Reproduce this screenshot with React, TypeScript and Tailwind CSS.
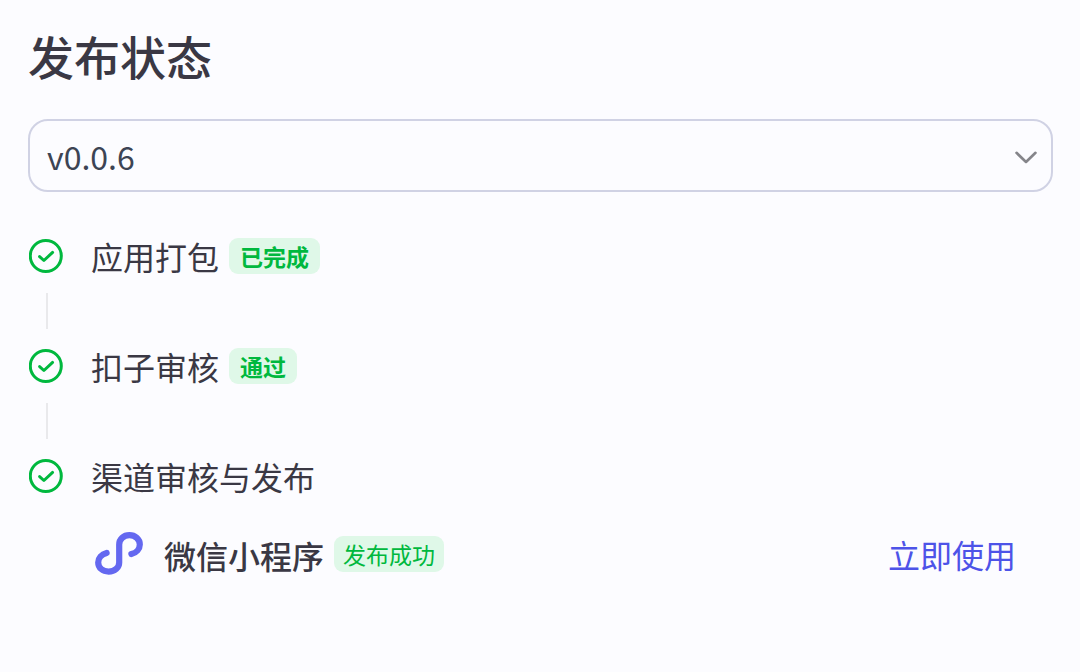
import { useState } from "react";

function CheckCircle() {
  return (
    <svg viewBox="0 0 34 34" className="h-[34px] w-[34px] shrink-0" fill="none" stroke="#00b83e" aria-hidden="true">
      <circle cx="16.8" cy="17" r="15.5" strokeWidth="3" />
      <path d="M10.6 17.6 L14.9 21.5 L23.6 13.4" strokeWidth="3" strokeLinecap="round" strokeLinejoin="round" />
    </svg>
  );
}

function MiniProgramLogo() {
  return (
    <svg viewBox="0 0 50 44" className="h-[44px] w-[50px] shrink-0" fill="none" aria-hidden="true">
      <path
        d="M12.6 20.9 C7.6 22.2 4.2 26 4.2 30.4 C4.2 35.8 8.8 39.6 14.6 39.6 C20.8 39.6 25.2 35.6 25.2 30.4 L25.2 12.6 C25.2 7.2 29.6 3.2 35.4 3.2 C41.2 3.2 45.8 7.2 45.8 12.4 C45.8 17 42.4 20.8 37.4 22"
        stroke="#6468f0"
        strokeWidth="6.2"
        strokeLinecap="round"
        strokeLinejoin="round"
      />
    </svg>
  );
}

const steps = [
  { title: "应用打包", status: "已完成" },
  { title: "扣子审核", status: "通过" },
  { title: "渠道审核与发布", status: "" },
];

export default function App() {
  const [version, setVersion] = useState("v0.0.6");
  return (
    <main className="min-h-screen bg-[#fcfcff] pt-[25px] pr-[27px] pb-24 pl-7 font-['Noto_Sans_CJK_SC',sans-serif] text-[#3a3844]">
      <h1 className="text-[46px] leading-[60px] font-medium">发布状态</h1>

      <div className="relative mt-[34px]">
        <select
          aria-label="版本"
          value={version}
          onChange={(e) => setVersion(e.target.value)}
          className="block h-[73px] w-full appearance-none rounded-[20px] border-2 border-[#d0d2e4] bg-transparent px-[17px] text-[32px] text-[#3c4454]"
        >
          <option>v0.0.6</option>
        </select>
        <svg
          viewBox="0 0 24 14"
          className="pointer-events-none absolute top-[31px] right-[15px] h-[14px] w-[24px]"
          fill="none"
          stroke="#85858a"
          strokeWidth="2.6"
          strokeLinecap="round"
          strokeLinejoin="round"
          aria-hidden="true"
        >
          <path d="M2.5 2.8 L12 12 L21.5 2.8" />
        </svg>
      </div>

      <ol className="mt-[46px] pl-px">
        {steps.map((step, i) => (
          <li key={step.title}>
            <div className="flex h-9 items-center">
              <CheckCircle />
              <span className="ml-7 text-[32px] leading-9">{step.title}</span>
              {step.status && (
                <span className="ml-[10px] rounded-[9px] bg-[#dff8e8] px-[11px] text-[23px] leading-9 font-bold text-[#00b83e]">
                  {step.status}
                </span>
              )}
            </div>
            {i < steps.length - 1 && <div className="my-[19px] ml-[17px] h-9 w-0.5 bg-[#e9e9ec]" />}
          </li>
        ))}
      </ol>

      <div className="mt-[38px] flex items-center pr-[37px] pl-[66px]">
        <MiniProgramLogo />
        <span className="ml-5 pt-0.5 text-[32px] leading-10 font-medium">微信小程序</span>
        <span className="ml-[10px] rounded-[9px] bg-[#dff8e8] px-[9px] text-[23px] leading-9 text-[#00b83e]">发布成功</span>
        <a href="#use" className="ml-auto text-[32px] leading-10 text-[#4d53e8]">
          立即使用
        </a>
      </div>
    </main>
  );
}
